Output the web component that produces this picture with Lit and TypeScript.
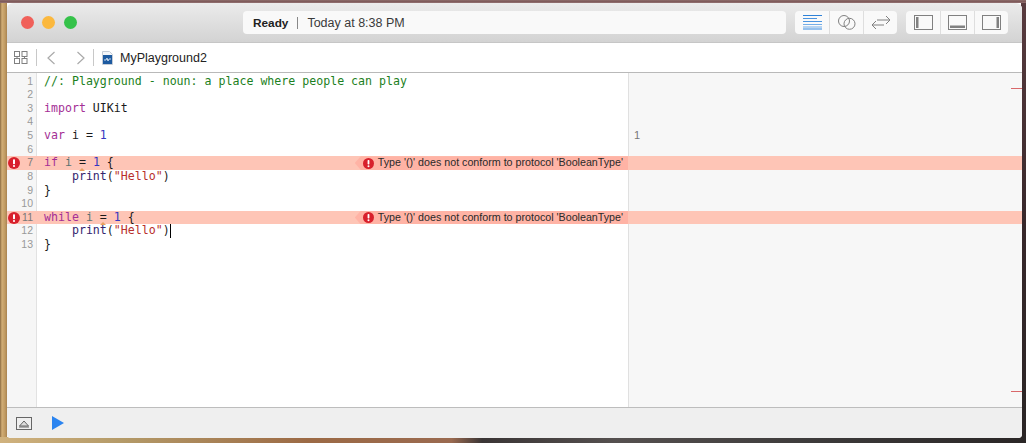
import { LitElement, html, css, svg } from "lit";
import { customElement } from "lit/decorators.js";

const errIcon = (s: number) => svg`<svg class="err" width=${s} height=${s} viewBox="0 0 12 12"><circle cx="6" cy="6" r="6" fill="#d8202c"/><rect x="5" y="2.2" width="2" height="5" rx="0.8" fill="#fff"/><circle cx="6" cy="9" r="1.1" fill="#fff"/></svg>`;

type Tok = [string, string];
const lines: { n: number; toks: Tok[]; err?: boolean; caret?: boolean; mark?: number }[] = [
  { n: 1, toks: [["c", "//: Playground - noun: a place where people can play"]] },
  { n: 2, toks: [] },
  { n: 3, toks: [["k", "import"], ["p", " UIKit"]] },
  { n: 4, toks: [] },
  { n: 5, toks: [["k", "var"], ["p", " i = "], ["n", "1"]] },
  { n: 6, toks: [] },
  { n: 7, err: true, mark: 5, toks: [["k", "if"], ["v", " i"], ["p", " = "], ["n", "1"], ["p", " {"]] },
  { n: 8, toks: [["p", "    "], ["f", "print"], ["p", "("], ["s", "\"Hello\""], ["p", ")"]] },
  { n: 9, toks: [["p", "}"]] },
  { n: 10, toks: [] },
  { n: 11, err: true, mark: 8, toks: [["k", "while"], ["v", " i"], ["p", " = "], ["n", "1"], ["p", " {"]] },
  { n: 12, caret: true, toks: [["p", "    "], ["f", "print"], ["p", "("], ["s", "\"Hello\""], ["p", ")"]] },
  { n: 13, toks: [["p", "}"]] },
];

@customElement("app-root")
export class AppRoot extends LitElement {
  static styles = css`
    :host { display: block; width: 1026px; height: 443px; overflow: hidden;
      font-family: "Liberation Sans", Arial, sans-serif;
      background:
        linear-gradient(180deg, #8d6c6a 0, #7a5556 2px, #a08080 3px, transparent 3px) 0 0 / 100% 3px no-repeat,
        linear-gradient(90deg, #c5a98a 0, #a57c78 25%, #86585a 60%, #4d3a3d 100%) 0 0 / 100% 3px no-repeat,
        linear-gradient(90deg, #d0b27e 0, #b49a68 12%, #9c6a45 30%, #9a6a50 44%, #3a3535 47%, #55504f 60%, #3c3a3a 80%, #2a2626 100%) 0 100% / 100% 6px no-repeat,
        linear-gradient(90deg, #8a6a40 0, #d2ae76 2px, #c09a62 5px, #a88350 7px, transparent 7px) 0 0 / 8px 100% no-repeat,
        linear-gradient(180deg, #5a3c40 0, #38282b 50%, #2a2525 100%) 100% 0 / 5px 100% no-repeat;
    }
    .frame { height: 443px; box-sizing: border-box; padding: 3px 4px 5px 7px; }
    .win { height: 435px; border-radius: 6px 6px 4px 4px; overflow: hidden; display: flex; flex-direction: column; background: #fff; }
    .title { height: 40px; flex: none; box-sizing: border-box; background: linear-gradient(180deg, #ebebeb, #d3d3d3); border-bottom: 1px solid #c6c6c6; display: flex; align-items: center; padding: 0 0 0 14px; }
    .lights { display: flex; gap: 8.3px; width: 222px; flex: none; }
    .lights i { width: 13px; height: 13px; border-radius: 50%; display: block; }
    .red { background: #f0605a; } .amber { background: #fbb83e; } .green { background: #35c24a; }
    .status { width: 543px; height: 23px; flex: none; background: #f9f9f9; border-radius: 4px; box-sizing: border-box; padding-left: 10px; display: flex; align-items: center; font-size: 12.5px; color: #3a3a3a; }
    .status b { font-weight: 700; font-size: 11.8px; color: #222; }
    .status .sep { width: 1px; height: 12px; background: #888; margin: 0 9px 0 9px; }
    .seg { display: flex; height: 23px; background: #f9f9f9; border-radius: 4px; flex: none; margin-left: 9px; }
    .seg > div { width: 34px; display: flex; align-items: center; justify-content: center; border-left: 1px solid #dedede; box-sizing: border-box; }
    .seg > div:first-child { border-left: 0; }
    .tool { height: 30px; flex: none; box-sizing: border-box; border-bottom: 1px solid #b9b9b9; background: #fff; display: flex; align-items: center; padding-left: 7px; }
    .tool .bar { width: 1px; height: 17px; background: #c8c8c8; }
    .tool svg { flex: none; }
    .bar1 { margin-left: 8px; } .bar2 { margin-left: 8px; }
    .back { margin-left: 10px; } .fwd { margin-left: 22px; } .file { margin-left: 8px; }
    .tool .name { font-size: 12.5px; color: #222; margin-left: 7px; }
    .mid { flex: 1; display: flex; min-height: 0; }
    .code { flex: 1; position: relative; padding-top: 1.5px; background: linear-gradient(90deg, #f6f6f6 0, #f6f6f6 29px, #e2e2e2 29px, #e2e2e2 30px, #fff 30px); }
    .row { height: 13.64px; display: flex; position: relative; font-family: "DejaVu Sans Mono", monospace; font-size: 11.6px; line-height: 13.64px; white-space: pre; }
    .num { width: 26px; text-align: right; font-family: "Liberation Sans", sans-serif; font-size: 10.5px; color: #999; flex: none; }
    .txt { margin-left: 11px; }
    .row.bad { background: #fec5b6; }
    .c { color: #1c7f22; } .k { color: #a42f96; } .n { color: #3636c0; } .s { color: #b8302c; } .f { color: #33256f; } .p { color: #1a1a1a; } .v { color: #5b7272; }
    .err { flex: none; display: block; }
    .row > .err { position: absolute; left: 1px; top: 1px; }
    .bad .num { color: #777; }
    .msg { position: absolute; right: 0; top: 0; bottom: 0; display: flex; align-items: center; background: #ffb3a5; font-family: "Liberation Sans", sans-serif; font-size: 10.7px; color: #2a2a2a; padding: 0 5px 0 8px; gap: 4px; clip-path: polygon(0 50%, 6px 0, 100% 0, 100% 100%, 6px 100%); }
    .tri { position: absolute; width: 0; height: 0; border-left: 3px solid transparent; border-right: 3px solid transparent; border-bottom: 3px solid #e8a060; bottom: -1px; }
    .cursor { display: inline-block; width: 1px; height: 14px; background: #000; vertical-align: top; }
    .res { width: 394px; flex: none; background: #f7f7f7; border-left: 1px solid #e0e0e0; box-sizing: border-box; position: relative; padding-top: 1.5px; }
    .res .row { font-family: "Liberation Sans", sans-serif; font-size: 11px; color: #777; padding-left: 5px; }
    .res .row.bad { margin-left: -1px; }
    .tick { position: absolute; right: 0; width: 11px; height: 1px; background: #d9686a; }
    .t1 { top: 15px; } .t2 { top: 318px; }
    .foot { height: 31px; flex: none; box-sizing: border-box; background: #efefef; border-top: 1px solid #bdbdbd; display: flex; align-items: center; padding-left: 9px; gap: 20px; }
  `;

  private row(l: (typeof lines)[number]) {
    return html`<div class="row ${l.err ? "bad" : ""}">
      ${l.err ? errIcon(12) : ""}
      <span class="num">${l.n}</span>
      <span class="txt">${l.toks.map(([c, t]) => html`<span class=${c}>${t}</span>`)}${l.caret ? html`<span class="cursor"></span>` : ""}</span>
      ${l.mark ? html`<span class="tri" style="left:${40 + l.mark * 7 - 3}px"></span>` : ""}
      ${l.err ? html`<span class="msg">${errIcon(11)}<span>Type '()' does not conform to protocol 'BooleanType'</span></span>` : ""}
    </div>`;
  }

  render() {
    return html`<div class="frame"><div class="win">
      <div class="title">
        <div class="lights"><i class="red"></i><i class="amber"></i><i class="green"></i></div>
        <div class="status"><b>Ready</b><span class="sep"></span><span>Today at 8:38 PM</span></div>
        <div class="seg">
          <div><svg width="19" height="15" viewBox="0 0 19 15" fill="none" stroke-width="1"><path d="M0 .5h19" stroke="#2f82d8"/><path d="M0 3.5h14" stroke="#4a94e0"/><path d="M0 6.5h19" stroke="#4a94e0"/><path d="M0 9.5h19M0 12h19" stroke="#74aee8"/><path d="M0 14h19" stroke="#74aee8" stroke-width="1.4"/></svg></div>
          <div><svg width="18" height="15" viewBox="0 0 18 15" fill="none" stroke="#808080" stroke-width="1"><circle cx="6" cy="6" r="5.5"/><circle cx="11.5" cy="8.8" r="5.5"/></svg></div>
          <div><svg width="20" height="15" viewBox="0 0 20 15" fill="none" stroke="#808080" stroke-width="1"><path d="M6 5h13M15 1l4 4-4 4M13 10H1M5 6l-4 4 4 4"/></svg></div>
        </div>
        <div class="seg">
          <div><svg width="19" height="15" viewBox="0 0 19 15" fill="none"><rect x=".5" y=".5" width="18" height="14" stroke="#808080"/><rect x="2" y="2" width="2.5" height="11" fill="#808080"/></svg></div>
          <div><svg width="19" height="15" viewBox="0 0 19 15" fill="none"><rect x=".5" y=".5" width="18" height="14" stroke="#808080"/><rect x="2" y="10.5" width="15" height="2.5" fill="#808080"/></svg></div>
          <div><svg width="19" height="15" viewBox="0 0 19 15" fill="none"><rect x=".5" y=".5" width="18" height="14" stroke="#808080"/><rect x="14.5" y="2" width="2.5" height="11" fill="#808080"/></svg></div>
        </div>
      </div>
      <div class="tool">
        <svg width="14" height="13" viewBox="0 0 14 13" fill="none" stroke="#808080"><rect x=".5" y=".5" width="5" height="5"/><rect x="8" y=".5" width="5" height="5"/><rect x=".5" y="7.5" width="5" height="5"/><rect x="8" y="7.5" width="5" height="5"/><path d="M3 5.5v2M10.5 5.5v2"/></svg>
        <span class="bar bar1"></span>
        <svg class="back" width="8" height="14" viewBox="0 0 8 14" fill="none" stroke="#aaa" stroke-width="1.2"><path d="M7.5 1L1 7l6.5 6"/></svg>
        <svg class="fwd" width="8" height="14" viewBox="0 0 8 14" fill="none" stroke="#aaa" stroke-width="1.2"><path d="M.5 1L7 7 .5 13"/></svg>
        <span class="bar bar2"></span>
        <svg class="file" width="11" height="14" viewBox="0 0 11 14"><path d="M.5.5h7l3 3v10h-10z" fill="#f4f6f9" stroke="#c5ccd6"/><rect x="1" y="4" width="9" height="9" fill="#1d5aa0"/><path d="M2 9h2l1-2 1 3 1-2h2" fill="none" stroke="#dbe8f5" stroke-width=".9"/></svg>
        <span class="name">MyPlayground2</span>
      </div>
      <div class="mid">
        <div class="code">${lines.map((l) => this.row(l))}</div>
        <div class="res">
          ${lines.map((l) => html`<div class="row ${l.err ? "bad" : ""}">${l.n === 5 ? "1" : ""}</div>`)}
          <span class="tick t1"></span>
          <span class="tick t2"></span>
        </div>
      </div>
      <div class="foot">
        <svg width="16" height="13" viewBox="0 0 16 13" fill="none"><rect x=".5" y=".5" width="15" height="12" stroke="#666"/><path d="M3.5 9L8 4l4.5 5z" stroke="#666" fill="#ddd"/><path d="M3 10h10" stroke="#666"/></svg>
        <svg width="12" height="14" viewBox="0 0 12 14"><path d="M0 0l12 7L0 14z" fill="#2b84f0"/></svg>
      </div>
    </div></div>`;
  }
}
